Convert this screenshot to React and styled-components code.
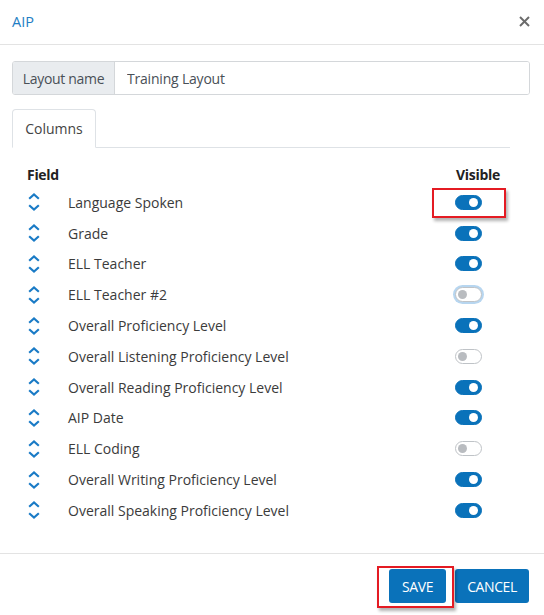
import React from "react";
import styled, { createGlobalStyle } from "styled-components";

const Global = createGlobalStyle`
  html, body { margin: 0; padding: 0; background: #fff; }
  body { font-family: "Open Sans", "Noto Sans", sans-serif; color: #333; }
  * { box-sizing: border-box; }
`;

const BLUE = "#0a72ba";

const Dialog = styled.div`
  width: 544px;
  height: 615px;
  display: flex;
  flex-direction: column;
  background: #fff;
`;

const Header = styled.div`
  height: 45px;
  display: flex;
  align-items: center;
  justify-content: space-between;
  padding: 0 13px 2px 12px;
  border-bottom: 1px solid #e3e3e3;
`;

const Title = styled.div`
  color: #1f7ec4;
  font-size: 14.5px;
`;

const Close = styled.button`
  border: 0;
  background: none;
  padding: 0;
  width: 14px;
  height: 14px;
  display: flex;
  align-items: center;
  justify-content: center;
  cursor: pointer;
`;

const Body = styled.div`
  flex: 1;
  padding: 16px 14px 0 12px;
`;

const InputGroup = styled.div`
  display: flex;
  height: 34px;
  border: 1px solid #d4d7da;
  border-radius: 3px;
  overflow: hidden;
`;

const Addon = styled.div`
  width: 102px;
  display: flex;
  align-items: center;
  justify-content: center;
  background: #e9ecef;
  border-right: 1px solid #d4d7da;
  font-size: 14px;
  color: #495057;
  letter-spacing: -0.3px;
`;

const TextInput = styled.input`
  flex: 1;
  border: 0;
  outline: none;
  padding: 0 12px;
  font: inherit;
  font-size: 14px;
  color: #495057;
  letter-spacing: -0.2px;
`;

const TabBar = styled.div`
  margin-top: 14px;
  margin-right: 20px;
  display: flex;
  border-bottom: 1px solid #dee2e6;
`;

const Tab = styled.div`
  height: 39px;
  width: 84px;
  display: flex;
  align-items: center;
  justify-content: center;
  border: 1px solid #dee2e6;
  border-bottom-color: #fff;
  border-radius: 4px 4px 0 0;
  margin-bottom: -1px;
  font-size: 14px;
  color: #444;
`;

const Table = styled.div`
  padding: 17px 0 0 15px;
  width: 490px;
`;

const HeadRow = styled.div`
  display: grid;
  grid-template-columns: 1fr 46px;
  font-weight: 700;
  font-size: 14px;
  color: #222;
  letter-spacing: -0.3px;
  height: 17px;
  align-items: center;
  margin-bottom: 5px;
`;

const Row = styled.div`
  display: grid;
  grid-template-columns: 41px 1fr 46px;
  align-items: center;
  height: 30.8px;
`;

const Label = styled.div`
  font-size: 14px;
  color: #3b3b3b;
`;

const Cell = styled.div`
  position: relative;
  display: flex;
  align-items: center;
`;

const Mark = styled.div`
  position: absolute;
  left: -24px;
  top: -7px;
  width: 74px;
  height: 30px;
  border: 2px solid #e41b23;
  box-shadow: 2px 3px 3px rgba(0, 0, 0, 0.3);
`;

const Track = styled.div`
  position: relative;
  width: 27px;
  height: 15px;
  border-radius: 8px;
  background: ${(p) => (p.$on ? BLUE : "#fff")};
  border: 1px solid ${(p) => (p.$on ? BLUE : "#bfc3c7")};
  box-shadow: ${(p) => (p.$focus ? "0 0 0 2px #b7d6f0" : "none")};
  margin-left: -1px;
`;

const Knob = styled.div`
  position: absolute;
  top: 2px;
  left: ${(p) => (p.$on ? "13px" : "2px")};
  width: 9px;
  height: 9px;
  border-radius: 50%;
  background: ${(p) => (p.$on ? "#fff" : "#b9bcc0")};
`;

const Footer = styled.div`
  height: 62px;
  border-top: 1px solid #e3e3e3;
  display: flex;
  justify-content: flex-end;
  align-items: flex-start;
  gap: 9px;
  padding: 15px 15px 0 0;
`;

const ButtonWrap = styled.div`
  position: relative;
`;

const Button = styled.button`
  height: 34px;
  width: ${(p) => p.$w}px;
  padding: 0;
  border: 0;
  border-radius: 3px;
  background: ${BLUE};
  color: #fff;
  font-family: inherit;
  font-size: 14px;
  letter-spacing: -0.4px;
  cursor: pointer;
`;

const ButtonMark = styled.div`
  position: absolute;
  left: -12px;
  top: -3px;
  width: 77px;
  height: 42px;
  border: 2px solid #e41b23;
  box-shadow: 2px 3px 3px rgba(0, 0, 0, 0.3);
  pointer-events: none;
`;

const Sorter = () => (
  <svg width="14" height="18" viewBox="0 0 14 18" fill="none" stroke="#1a7bc6" strokeWidth="2.2" strokeLinecap="square">
    <polyline points="3,5 7,1.5 11,5" />
    <polyline points="3,13 7,16.5 11,13" />
  </svg>
);

const fields = [
  ["Language Spoken", true, false, true],
  ["Grade", true],
  ["ELL Teacher", true],
  ["ELL Teacher #2", false, true],
  ["Overall Proficiency Level", true],
  ["Overall Listening Proficiency Level", false],
  ["Overall Reading Proficiency Level", true],
  ["AIP Date", true],
  ["ELL Coding", false],
  ["Overall Writing Proficiency Level", true],
  ["Overall Speaking Proficiency Level", true],
];

export default function App() {
  return (
    <>
      <Global />
      <Dialog>
        <Header>
          <Title>AIP</Title>
          <Close aria-label="Close">
            <svg width="11" height="11" viewBox="0 0 11 11" stroke="#6b6b6b" strokeWidth="2">
              <line x1="1" y1="1" x2="10" y2="10" />
              <line x1="10" y1="1" x2="1" y2="10" />
            </svg>
          </Close>
        </Header>
        <Body>
          <InputGroup>
            <Addon>Layout name</Addon>
            <TextInput defaultValue="Training Layout" />
          </InputGroup>
          <TabBar>
            <Tab>Columns</Tab>
          </TabBar>
          <Table>
            <HeadRow>
              <div>Field</div>
              <div>Visible</div>
            </HeadRow>
            {fields.map(([name, on, focus, mark]) => (
              <Row key={name}>
                <Sorter />
                <Label>{name}</Label>
                <Cell>
                  {mark && <Mark />}
                  <Track $on={on} $focus={focus}>
                    <Knob $on={on} />
                  </Track>
                </Cell>
              </Row>
            ))}
          </Table>
        </Body>
        <Footer>
          <ButtonWrap>
            <Button $w={57}>SAVE</Button>
            <ButtonMark />
          </ButtonWrap>
          <Button $w={74}>CANCEL</Button>
        </Footer>
      </Dialog>
    </>
  );
}
